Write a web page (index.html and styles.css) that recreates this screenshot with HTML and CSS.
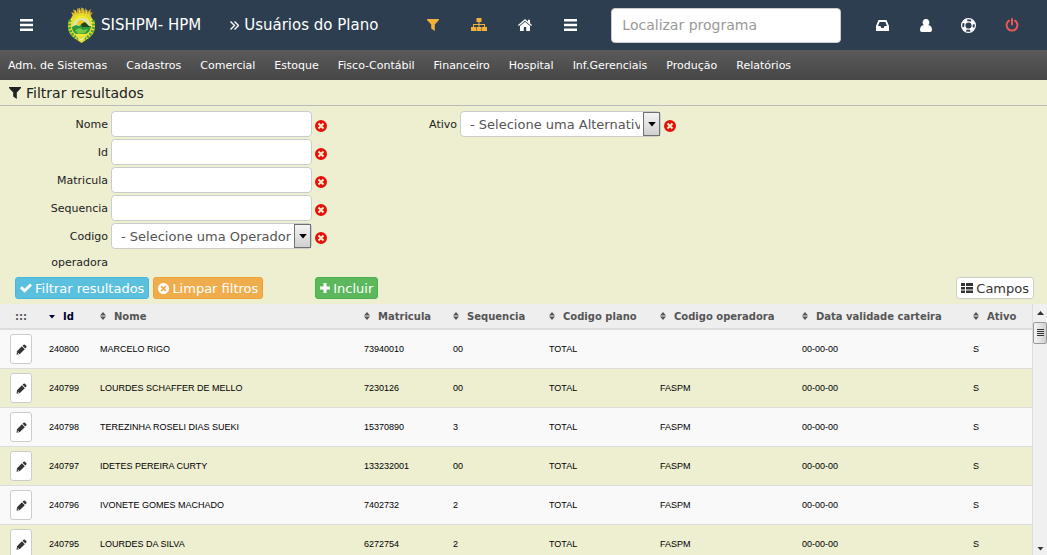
FILE: index.html
```html
<!DOCTYPE html>
<html lang="pt-BR">
<head>
    <meta charset="UTF-8">
    <meta name="viewport" content="width=device-width, initial-scale=1.0">
    <title>SISHPM - Usuários do Plano</title>
    <link rel="stylesheet" href="styles.css">
</head>
<body>

    <!-- Shared icons -->
    <svg class="sprite" aria-hidden="true">
        <symbol id="bars" viewBox="0 0 13 12"><path d="M0 0h13v2.500H0zM0 4.700h13v2.500H0zM0 9.400h13v2.500H0z"/></symbol>
        <symbol id="filter" viewBox="0 0 12 12"><path d="M0 0h12v1L7.800 5.500V12L4.200 9.500v-4L0 1z"/></symbol>
        <symbol id="clear" viewBox="0 0 12 12"><path fill-rule="evenodd" d="M6 0a6 6 0 1 1 0 12A6 6 0 0 1 6 0zM4.200 2.800L2.800 4.200 4.600 6 2.800 7.800l1.400 1.400L6 7.400l1.800 1.800 1.400-1.400L7.400 6l1.800-1.800-1.400-1.400L6 4.600z"/></symbol>
        <symbol id="sort" viewBox="0 0 6 8"><path d="M3 0l3 3.400H0zM3 8l3-3.400H0z"/></symbol>
        <symbol id="down" viewBox="0 0 6 4"><path d="M0 0h6L3 3.500z"/></symbol>
        <symbol id="pencil" viewBox="0 0 12 12"><path fill-rule="evenodd" d="M8.300.8q.7-.7 1.400 0l1.500 1.500q.7.700 0 1.400L10.200 4.800 7.100 1.900zM6.400 2.500L9.600 5.600 4.200 11 .6 11.600 1.100 7.900zM2 9.300l-.2.900.7.700.9-.2z"/></symbol>
    </svg>

    <header class="topbar">
        <button class="icon-btn menu-btn" aria-label="Menu"><svg width="13" height="12"><use href="#bars"/></svg></button>
        <a class="brand" href="#">
            <svg class="logo" viewBox="0 0 29 36" aria-hidden="true">
                <path d="M6 9L4 5l3 1-1-4 4 3 0-4 3 3 1.500-4L17 4l2-3 1 4 4-3-1 4 3-1-3 5z" fill="#c5a126"/>
                <path d="M8 3l1 4M12 1l1 6M16 1v6M20 3l-1 5M23 5l-2 4M5 6l3 3" stroke="#eadb5a" fill="none"/>
                <path d="M6 8Q14.500 4 23 8L28 16Q29 26 22 31L14.500 36 7 31Q0 26 1 16z" fill="#e4d92a"/>
                <path d="M3 13Q0 25 11 32M26 13Q29 25 18 32" stroke="#48a536" stroke-width="3" stroke-dasharray="2 1.500" fill="none"/>
                <path d="M5 12Q2 23 12 31M24 12Q27 23 17 31" stroke="#f4f2a0" stroke-width="1" stroke-dasharray="1 2" fill="none"/>
                <ellipse cx="14.500" cy="19" rx="9.500" ry="10.500" fill="#f0e92e"/>
                <path d="M6 19q0-7 8.500-8t8.500 8z" fill="#d6e8b0"/>
                <path d="M10 18q0-4 4-5 5 1 5 5z" fill="#f6c51c"/>
                <path d="M5 20l4-2 3 1 3-2 4 2 5 0q0 5-5 8H9q-4-3-4-7z" fill="#2c9a3c"/>
                <path d="M14 17l4-2 3 3 2 2h-8z" fill="#24451f"/>
                <path d="M8 23l5-2 3 2 5-1-3 4-7 1z" fill="#79c842"/>
                <path d="M9 29l5 3 5-3-4.500 5z" fill="#e9f1ae"/>
            </svg>
            <span>SISHPM- HPM</span>
        </a>
        <h1 class="page-title">
            <svg width="9" height="9" viewBox="0 0 9 9" fill="none" stroke="currentColor" stroke-width="1.400" aria-hidden="true"><path d="M.5.5l4 4-4 4M4.500.5l4 4-4 4"/></svg>
            Usuários do Plano
        </h1>
        <nav class="tools" aria-label="Atalhos">
            <button class="icon-btn warn" aria-label="Filtro"><svg width="12" height="12"><use href="#filter"/></svg></button>
            <button class="icon-btn warn" aria-label="Estrutura"><svg width="16" height="14" viewBox="0 0 16 14"><path d="M5.500 0h5v4h-2v2H14v3h2v4h-5V9h2V7H8.500v2h2v4h-5V9h2V7H3v2h2v4H0V9h2V6h5.500V4h-2z"/></svg></button>
            <button class="icon-btn" aria-label="Início"><svg width="14" height="12" viewBox="0 0 14 12"><path d="M7 0l3 2.500V.8h2v3.400L14 6l-.8.900L7 1.700.8 6.900 0 6zM7 2.800l5 4.200v4.500q0 .5-.5.5H8.200V8H5.800v4H2.500Q2 12 2 11.500V7z"/></svg></button>
            <button class="icon-btn" aria-label="Programas"><svg width="13" height="12"><use href="#bars"/></svg></button>
        </nav>
        <input class="search" type="text" placeholder="Localizar programa" aria-label="Localizar programa">
        <nav class="user-tools" aria-label="Usuário">
            <button class="icon-btn" aria-label="Mensagens"><svg width="13" height="11" viewBox="0 0 13 11"><path fill-rule="evenodd" d="M2.500 0h8L13 6v4.500q0 .5-.5.5H.5Q0 11 0 10.500V6zM3.600 2L2 6h2.400l1 2h2.200l1-2H11L9.400 2z"/></svg></button>
            <button class="icon-btn" aria-label="Perfil"><svg width="12" height="13" viewBox="0 0 12 13"><path d="M6 0a3.200 3.500 0 0 1 2.200 6.200Q12 6.300 12 11q0 2-2 2H2q-2 0-2-2 0-4.700 3.800-4.800A3.200 3.500 0 0 1 6 0z"/></svg></button>
            <button class="icon-btn" aria-label="Ajuda"><svg width="15" height="15" viewBox="0 0 15 15" fill="none" stroke="currentColor"><circle cx="7.500" cy="7.500" r="6.900" stroke-width="1.200"/><circle cx="7.500" cy="7.500" r="3.700" stroke-width="1.200"/><circle cx="7.500" cy="7.500" r="5.200" stroke-width="3.400" stroke-dasharray="4.200 3.968" stroke-dashoffset="-1.980"/></svg></button>
            <button class="icon-btn danger" aria-label="Sair"><svg width="14" height="14" viewBox="0 0 14 14" fill="none" stroke="currentColor" stroke-width="2" stroke-linecap="round"><path d="M7 1v5.500M4 2.700a5.400 5.400 0 1 0 6 0"/></svg></button>
        </nav>
    </header>

    <nav class="main-menu" aria-label="Principal">
        <a href="#">Adm. de Sistemas</a>
        <a href="#">Cadastros</a>
        <a href="#">Comercial</a>
        <a href="#">Estoque</a>
        <a href="#">Fisco-Contábil</a>
        <a href="#">Financeiro</a>
        <a href="#">Hospital</a>
        <a href="#">Inf.Gerenciais</a>
        <a href="#">Produção</a>
        <a href="#">Relatórios</a>
    </nav>

    <h2 class="section-title"><svg width="12" height="12" aria-hidden="true"><use href="#filter"/></svg> Filtrar resultados</h2>

    <form class="filters">
        <div class="fields">
            <div class="field-column">
                <div class="field">
                    <label for="nome">Nome</label>
                    <input class="control" type="text" id="nome">
                    <button type="button" class="clear-btn" aria-label="Limpar nome"><svg width="12" height="12"><use href="#clear"/></svg></button>
                </div>
                <div class="field">
                    <label for="id">Id</label>
                    <input class="control" type="text" id="id">
                    <button type="button" class="clear-btn" aria-label="Limpar id"><svg width="12" height="12"><use href="#clear"/></svg></button>
                </div>
                <div class="field">
                    <label for="matricula">Matricula</label>
                    <input class="control" type="text" id="matricula">
                    <button type="button" class="clear-btn" aria-label="Limpar matricula"><svg width="12" height="12"><use href="#clear"/></svg></button>
                </div>
                <div class="field">
                    <label for="sequencia">Sequencia</label>
                    <input class="control" type="text" id="sequencia">
                    <button type="button" class="clear-btn" aria-label="Limpar sequencia"><svg width="12" height="12"><use href="#clear"/></svg></button>
                </div>
                <div class="field">
                    <label for="operadora">Codigo operadora</label>
                    <div class="select-box">
                        <select class="control" id="operadora"><option>- Selecione uma Operadora -</option></select>
                        <span class="select-arrow"><svg width="8" height="5"><use href="#down"/></svg></span>
                    </div>
                    <button type="button" class="clear-btn" aria-label="Limpar operadora"><svg width="12" height="12"><use href="#clear"/></svg></button>
                </div>
            </div>
            <div class="field-column">
                <div class="field">
                    <label for="ativo">Ativo</label>
                    <div class="select-box">
                        <select class="control" id="ativo"><option>- Selecione uma Alternativa -</option></select>
                        <span class="select-arrow"><svg width="8" height="5"><use href="#down"/></svg></span>
                    </div>
                    <button type="button" class="clear-btn" aria-label="Limpar ativo"><svg width="12" height="12"><use href="#clear"/></svg></button>
                </div>
            </div>
        </div>
        <div class="actions">
            <button type="button" class="btn btn-info"><svg width="12" height="10" viewBox="0 0 12 10"><path d="M0 5.200l2-2 2.600 2.600L10 .4l2 2L4.600 9.800z"/></svg>Filtrar resultados</button>
            <button type="button" class="btn btn-warning"><svg width="11" height="11"><use href="#clear"/></svg>Limpar filtros</button>
            <button type="button" class="btn btn-success"><svg width="10" height="10" viewBox="0 0 10 10"><path d="M3.500 0h3v3.500H10v3H6.500V10h-3V6.500H0v-3h3.500z"/></svg>Incluir</button>
            <button type="button" class="btn btn-default"><svg width="12" height="10" viewBox="0 0 12 10"><path d="M0 0h4v3H0zM5 0h7v3H5zM0 4h4v2.500H0zM5 4h7v2.500H5zM0 7.500h4V10H0zM5 7.500h7V10H5z"/></svg>Campos</button>
        </div>
    </form>

    <!-- Results -->
    <main class="results">
        <div class="table-box">
            <table>
                <colgroup>
                    <col class="col-edit"><col class="col-id"><col class="col-nome"><col class="col-matricula"><col class="col-sequencia"><col class="col-plano"><col class="col-operadora"><col class="col-validade"><col class="col-ativo">
                </colgroup>
                <thead>
                    <tr>
                        <th class="grip">:::</th>
                        <th class="sorted"><svg width="6" height="4"><use href="#down"/></svg>Id</th>
                        <th><svg width="6" height="8"><use href="#sort"/></svg>Nome</th>
                        <th><svg width="6" height="8"><use href="#sort"/></svg>Matricula</th>
                        <th><svg width="6" height="8"><use href="#sort"/></svg>Sequencia</th>
                        <th><svg width="6" height="8"><use href="#sort"/></svg>Codigo plano</th>
                        <th><svg width="6" height="8"><use href="#sort"/></svg>Codigo operadora</th>
                        <th><svg width="6" height="8"><use href="#sort"/></svg>Data validade carteira</th>
                        <th><svg width="6" height="8"><use href="#sort"/></svg>Ativo</th>
                    </tr>
                </thead>
                <tbody>
                    <tr>
                        <td><button class="edit-btn" aria-label="Editar 240800"><svg width="11" height="11"><use href="#pencil"/></svg></button></td>
                        <td>240800</td><td>MARCELO RIGO</td><td>73940010</td><td>00</td><td>TOTAL</td><td></td><td>00-00-00</td><td>S</td>
                    </tr>
                    <tr>
                        <td><button class="edit-btn" aria-label="Editar 240799"><svg width="11" height="11"><use href="#pencil"/></svg></button></td>
                        <td>240799</td><td>LOURDES SCHAFFER DE MELLO</td><td>7230126</td><td>00</td><td>TOTAL</td><td>FASPM</td><td>00-00-00</td><td>S</td>
                    </tr>
                    <tr>
                        <td><button class="edit-btn" aria-label="Editar 240798"><svg width="11" height="11"><use href="#pencil"/></svg></button></td>
                        <td>240798</td><td>TEREZINHA ROSELI DIAS SUEKI</td><td>15370890</td><td>3</td><td>TOTAL</td><td>FASPM</td><td>00-00-00</td><td>S</td>
                    </tr>
                    <tr>
                        <td><button class="edit-btn" aria-label="Editar 240797"><svg width="11" height="11"><use href="#pencil"/></svg></button></td>
                        <td>240797</td><td>IDETES PEREIRA CURTY</td><td>133232001</td><td>00</td><td>TOTAL</td><td>FASPM</td><td>00-00-00</td><td>S</td>
                    </tr>
                    <tr>
                        <td><button class="edit-btn" aria-label="Editar 240796"><svg width="11" height="11"><use href="#pencil"/></svg></button></td>
                        <td>240796</td><td>IVONETE GOMES MACHADO</td><td>7402732</td><td>2</td><td>TOTAL</td><td>FASPM</td><td>00-00-00</td><td>S</td>
                    </tr>
                    <tr>
                        <td><button class="edit-btn" aria-label="Editar 240795"><svg width="11" height="11"><use href="#pencil"/></svg></button></td>
                        <td>240795</td><td>LOURDES DA SILVA</td><td>6272754</td><td>2</td><td>TOTAL</td><td>FASPM</td><td>00-00-00</td><td>S</td>
                    </tr>
                </tbody>
            </table>
        </div>
        <div class="scrollbar" aria-hidden="true">
            <svg width="7" height="4" viewBox="0 0 7 4"><path d="M0 4h7L3.500 0z"/></svg>
            <div class="thumb"><svg width="7" height="8" viewBox="0 0 7 8"><path d="M0 0h7v1H0zM0 2h7v1H0zM0 4h7v1H0zM0 6h7v1H0z"/></svg></div>
            <svg class="scroll-down" width="7" height="4"><use href="#down"/></svg>
        </div>
    </main>

</body>
</html>
```
FILE: styles.css
```css
* {
    box-sizing: border-box;
}
body {
    display: flex;
    flex-direction: column;
    height: 100vh;
    margin: 0;
    overflow: hidden;
    background: #eeeed0;
    color: #222;
    font-family: Verdana, "DejaVu Sans", sans-serif;
    font-size: 14px;
}
svg {
    display: block;
    flex: none;
    fill: currentColor;
}
svg[fill="none"] {
    fill: none;
}
button, input, select {
    margin: 0;
    font-family: inherit;
}
button {
    cursor: pointer;
}
a {
    color: inherit;
    text-decoration: none;
}
.sprite {
    position: absolute;
    width: 0;
    height: 0;
}

/* Top bar */
.topbar {
    display: flex;
    align-items: center;
    flex: none;
    height: 50px;
    background: #2c3e50;
    color: #fff;
    font-size: 15px;
}
.icon-btn {
    display: flex;
    align-items: center;
    justify-content: center;
    width: 43px;
    height: 50px;
    padding: 0;
    border: 0;
    background: none;
    color: #fff;
}
.menu-btn {
    margin-left: 5px;
}
.brand {
    display: flex;
    align-items: center;
    gap: 5px;
    margin-left: 19px;
    white-space: nowrap;
}
.logo {
    width: 29px;
    height: 36px;
}
.page-title {
    display: flex;
    align-items: center;
    gap: 5px;
    margin: 0 0 0 29px;
    font-size: 15px;
    font-weight: normal;
    white-space: nowrap;
}
.tools {
    display: flex;
    gap: 3px;
    margin-left: 33px;
}
.warn {
    color: #f3b13c;
}
.danger {
    color: #e9585a;
}
.search {
    width: 230px;
    height: 35px;
    margin-left: 19px;
    padding: 0 10px;
    border: 1px solid #ccc;
    border-radius: 4px;
    background: #fff;
    color: #555;
    font-size: 14px;
}
.search::placeholder {
    color: #999;
}
.user-tools {
    display: flex;
    margin-left: 20px;
}

/* Menu */
.main-menu {
    display: flex;
    align-items: center;
    gap: 19px;
    flex: none;
    height: 30px;
    padding: 1px 8px 0;
    background: linear-gradient(#5a5a5a, #464646);
    color: #fff;
    font-size: 11px;
    white-space: nowrap;
}

/* Filters */
.section-title {
    display: flex;
    align-items: center;
    gap: 5px;
    flex: none;
    height: 26px;
    margin: 0;
    padding-left: 9px;
    border-bottom: 1px solid #bbb;
    font-size: 14px;
    font-weight: normal;
}
.filters {
    flex: none;
}
.fields {
    display: grid;
    grid-template-columns: repeat(3, 1fr);
    padding-top: 5px;
}
.field {
    display: flex;
    gap: 3px;
    margin-bottom: 2px;
}
.field:last-child {
    margin-bottom: 1px;
}
.field label {
    width: 108px;
    padding: 1px 0 0 40px;
    font-size: 11px;
    line-height: 26px;
    text-align: right;
}
.field:not(:last-child) label {
    height: 26px;
}
.control {
    width: 201px;
    height: 26px;
    padding: 0 9px;
    border: 1px solid #ccc;
    border-radius: 4px;
    background: #fff;
    color: #555;
    font-size: 13px;
}
.select-box {
    position: relative;
    height: 26px;
}
select.control {
    display: block;
    padding-right: 20px;
    appearance: none;
}
.select-arrow {
    position: absolute;
    top: 1px;
    right: 1px;
    display: flex;
    align-items: center;
    justify-content: center;
    width: 17px;
    height: 24px;
    border: 1px solid #707070;
    background: linear-gradient(#f4f4f4, #d0d0d0);
    color: #000;
    pointer-events: none;
}
.clear-btn {
    height: 12px;
    margin-top: 9px;
    padding: 0;
    border: 0;
    background: none;
    color: #e60f0a;
}
.actions {
    display: flex;
    gap: 4px;
    padding: 0 13px 5px 15px;
}
.btn {
    display: flex;
    align-items: center;
    gap: 3px;
    height: 22px;
    padding: 0 4px;
    border: 1px solid;
    border-radius: 3px;
    color: #fff;
    font-size: 13px;
    white-space: nowrap;
}
.btn-info {
    border-color: #46b8da;
    background: #5bc0de;
}
.btn-warning {
    border-color: #eea236;
    background: #f0ad4e;
}
.btn-success {
    margin-left: 48px;
    border-color: #4cae4c;
    background: #5cb85c;
}
.btn-default {
    margin-left: auto;
    border-color: #ccc;
    background: #fff;
    color: #333;
}

/* Results */
.results {
    display: flex;
    flex: 1;
    min-height: 0;
}
.table-box {
    flex: 1;
    overflow: hidden;
}
table {
    width: 100%;
    border-collapse: separate;
    border-spacing: 0;
    table-layout: fixed;
}
.col-edit { width: 41px; }
.col-id { width: 51px; }
.col-matricula { width: 89px; }
.col-sequencia { width: 96px; }
.col-plano { width: 111px; }
.col-operadora { width: 142px; }
.col-validade { width: 171px; }
.col-ativo { width: 67px; }
th {
    height: 26px;
    padding: 0 0 0 8px;
    border-bottom: 2px solid #ddd;
    background: #eee;
    color: #555;
    font-size: 10px;
    text-align: left;
    white-space: nowrap;
}
th svg {
    display: inline-block;
    margin-right: 8px;
    vertical-align: baseline;
}
th.grip {
    padding-left: 15px;
}
th.sorted {
    color: #003;
}
th.sorted svg {
    vertical-align: middle;
}
td {
    height: 39px;
    padding: 0 0 0 8px;
    border-bottom: 1px solid #ddd;
    color: #000;
    font-family: Arial, "Liberation Sans", sans-serif;
    font-size: 9px;
}
td:first-child {
    padding-left: 10px;
}
tbody tr:nth-child(odd) {
    background: #f9f9f9;
}
.edit-btn {
    display: flex;
    align-items: center;
    justify-content: center;
    width: 22px;
    height: 30px;
    padding: 0;
    border: 1px solid #ccc;
    border-radius: 3px;
    background: #fff;
    color: #333;
}
.scrollbar {
    display: flex;
    flex-direction: column;
    align-items: center;
    width: 15px;
    padding: 7px 0 4px;
    border-left: 1px solid #ddd;
    background: #f0f0f0;
    color: #333;
}
.thumb {
    display: flex;
    align-items: center;
    justify-content: center;
    width: 14px;
    height: 22px;
    margin-top: 7px;
    border: 1px solid #999;
    border-radius: 2px;
    background: linear-gradient(to right, #f5f5f5, #d0d0d0);
}
.scroll-down {
    margin-top: auto;
}
```
